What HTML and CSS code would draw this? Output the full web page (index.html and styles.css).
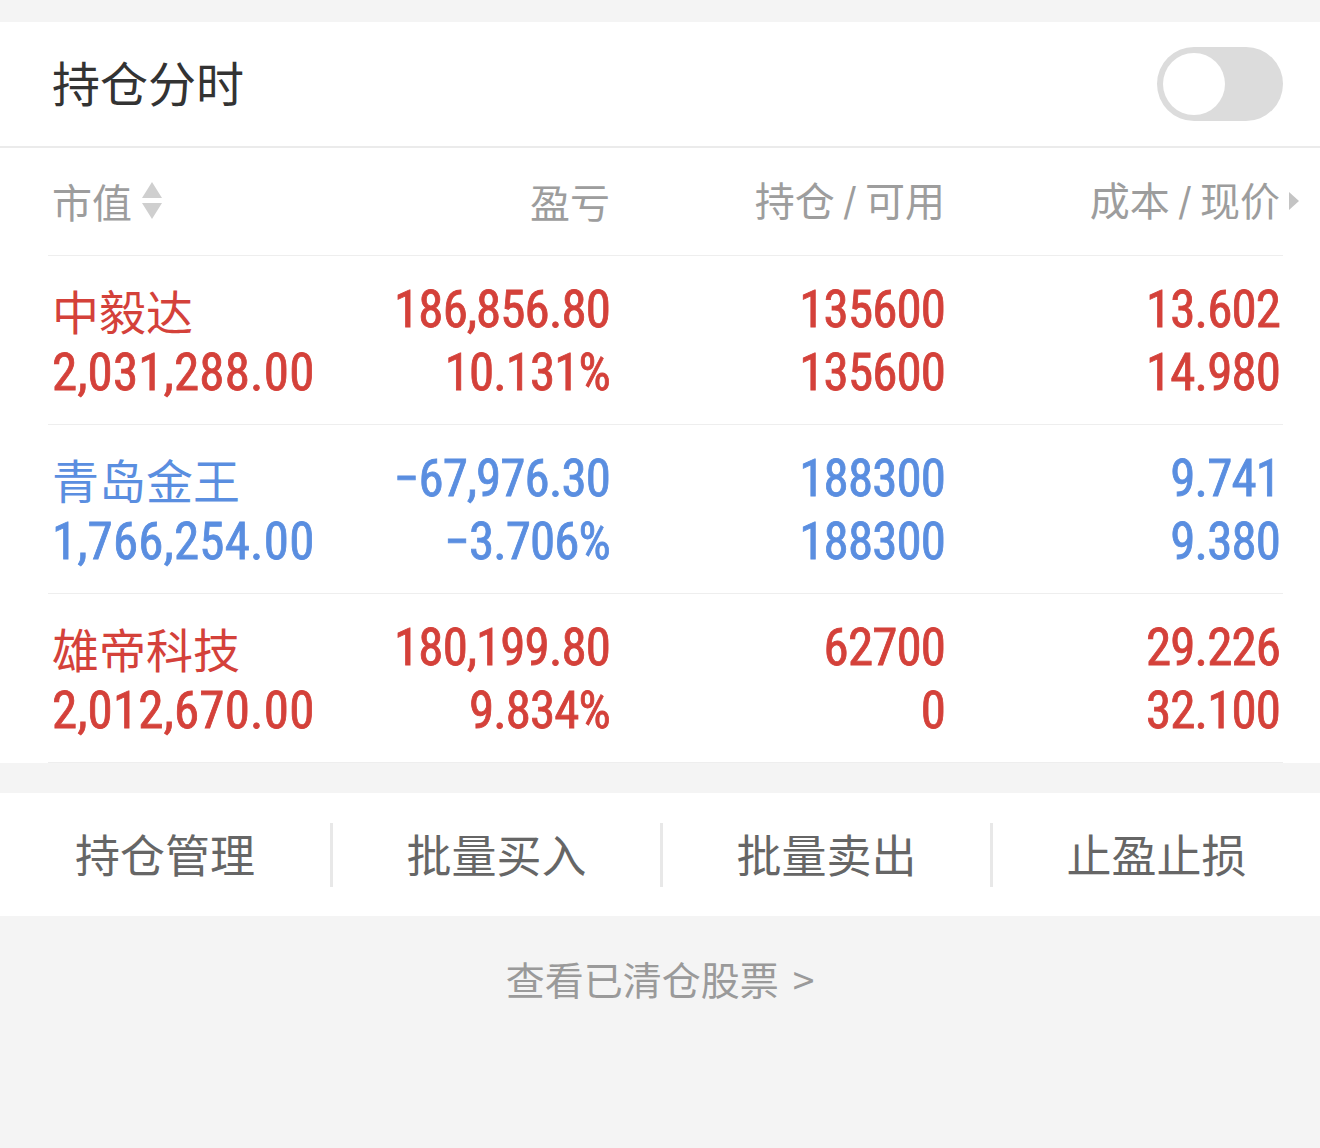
FILE: index.html
```html
<!DOCTYPE html>
<html lang="zh-CN">
<head>
<meta charset="utf-8">
<title>持仓分时</title>
<link rel="stylesheet" href="styles.css">
</head>
<body>
<div class="page">
  <section class="panel">
    <div class="title-bar">
      <h1 class="title">持仓分时</h1>
      <div class="toggle"><span class="knob"></span></div>
    </div>
    <div class="table">
      <div class="row head">
        <div class="cell c1">市值<svg class="sort" width="24" height="40" viewBox="0 0 24 40"><path d="M12 1 L22 17 L2 17 Z" fill="#cfcfcf"/><path d="M2 22 L22 22 L12 38 Z" fill="#cfcfcf"/></svg></div>
        <div class="cell c2">盈亏</div>
        <div class="cell c3">持仓<span class="sl">/</span>可用</div>
        <div class="cell c4">成本<span class="sl">/</span>现价<svg class="more" width="12" height="20" viewBox="0 0 12 20"><path d="M1 1 L11 10 L1 19 Z" fill="#c4c4c4"/></svg></div>
      </div>
      <div class="row data up">
        <div class="cell c1"><div class="name">中毅达</div><div class="num">2,031,288.00</div></div>
        <div class="cell c2"><div class="num">186,856.80</div><div class="num">10.131%</div></div>
        <div class="cell c3"><div class="num">135600</div><div class="num">135600</div></div>
        <div class="cell c4"><div class="num">13.602</div><div class="num">14.980</div></div>
      </div>
      <div class="row data down">
        <div class="cell c1"><div class="name">青岛金王</div><div class="num">1,766,254.00</div></div>
        <div class="cell c2"><div class="num">−67,976.30</div><div class="num">−3.706%</div></div>
        <div class="cell c3"><div class="num">188300</div><div class="num">188300</div></div>
        <div class="cell c4"><div class="num">9.741</div><div class="num">9.380</div></div>
      </div>
      <div class="row data up">
        <div class="cell c1"><div class="name">雄帝科技</div><div class="num">2,012,670.00</div></div>
        <div class="cell c2"><div class="num">180,199.80</div><div class="num">9.834%</div></div>
        <div class="cell c3"><div class="num">62700</div><div class="num">0</div></div>
        <div class="cell c4"><div class="num">29.226</div><div class="num">32.100</div></div>
      </div>
    </div>
  </section>
  <nav class="actions">
    <div class="action">持仓管理</div>
    <div class="action">批量买入</div>
    <div class="action">批量卖出</div>
    <div class="action">止盈止损</div>
  </nav>
  <div class="cleared">查看已清仓股票<span class="gt">&gt;</span></div>
</div>
</body>
</html>
```
FILE: styles.css
```css
* { box-sizing: border-box; }
html, body { margin: 0; padding: 0; }
body {
  background: #f4f4f4;
  font-family: "Noto Sans CJK SC", "Noto Sans", sans-serif;
  width: 1320px;
  height: 1148px;
  overflow: hidden;
}
.page { padding-top: 22px; }
.panel { background: #fff; }
.title-bar {
  height: 126px;
  display: flex;
  align-items: center;
  justify-content: space-between;
  padding: 0 37px 0 52px;
  border-bottom: 2px solid #ebebeb;
}
.title {
  margin: 0;
  font-size: 48px;
  font-weight: 400;
  color: #333;
  line-height: 1;
  padding-bottom: 6px;
}
.toggle {
  width: 126px;
  height: 74px;
  border-radius: 37px;
  background: #dcdcdc;
  padding: 6px;
  display: flex;
  align-items: center;
}
.knob {
  width: 62px;
  height: 62px;
  border-radius: 50%;
  background: #fff;
}
.table { margin: 0 37px 0 48px; }
.row {
  display: grid;
  grid-template-columns: 282px 280px 335px 335px;
  border-bottom: 1.5px solid #eeeeee;
}
.cell { text-align: right; }
.cell.c1 { text-align: left; padding-left: 4px; }
.head { height: 108px; align-items: center; }
.head .cell {
  font-size: 40px;
  color: #9d9d9d;
  line-height: 1;
  padding-bottom: 2px;
}
.head .c1 { display: flex; align-items: center; }
.head .c4 { position: relative; }
.sl { font-family: "Liberation Sans Narrow", "DejaVu Sans Condensed", sans-serif; margin: 0 9px; }
.sort { margin-left: 8px; }
.more { position: absolute; right: -20px; top: 12px; }
.data { height: 169px; padding-top: 22px; }
.data .cell > div { height: 63px; line-height: 63px; white-space: nowrap; }
.name { font-size: 47px; }
.num {
  font-family: "Liberation Sans Narrow", "Roboto Condensed", "DejaVu Sans Condensed", sans-serif;
  font-size: 51px;
  letter-spacing: -0.9px;
  -webkit-text-stroke: 0.8px currentColor;
}
.c1 .num { letter-spacing: 0.2px; }
.up .cell { color: #d4413a; }
.down .cell { color: #5a8ee0; }
.actions {
  margin-top: 30px;
  height: 123px;
  background: #fff;
  display: grid;
  grid-template-columns: repeat(4, 1fr);
  align-items: center;
}
.action {
  font-size: 45px;
  color: #666;
  text-align: center;
  line-height: 62px;
  border-left: 3px solid #e8e8e8;
  padding-bottom: 2px;
}
.action:first-child { border-left: none; }
.cleared {
  text-align: center;
  font-size: 39px;
  color: #9a9a9a;
  padding-top: 34px;
}
.gt { margin-left: 14px; }
```
